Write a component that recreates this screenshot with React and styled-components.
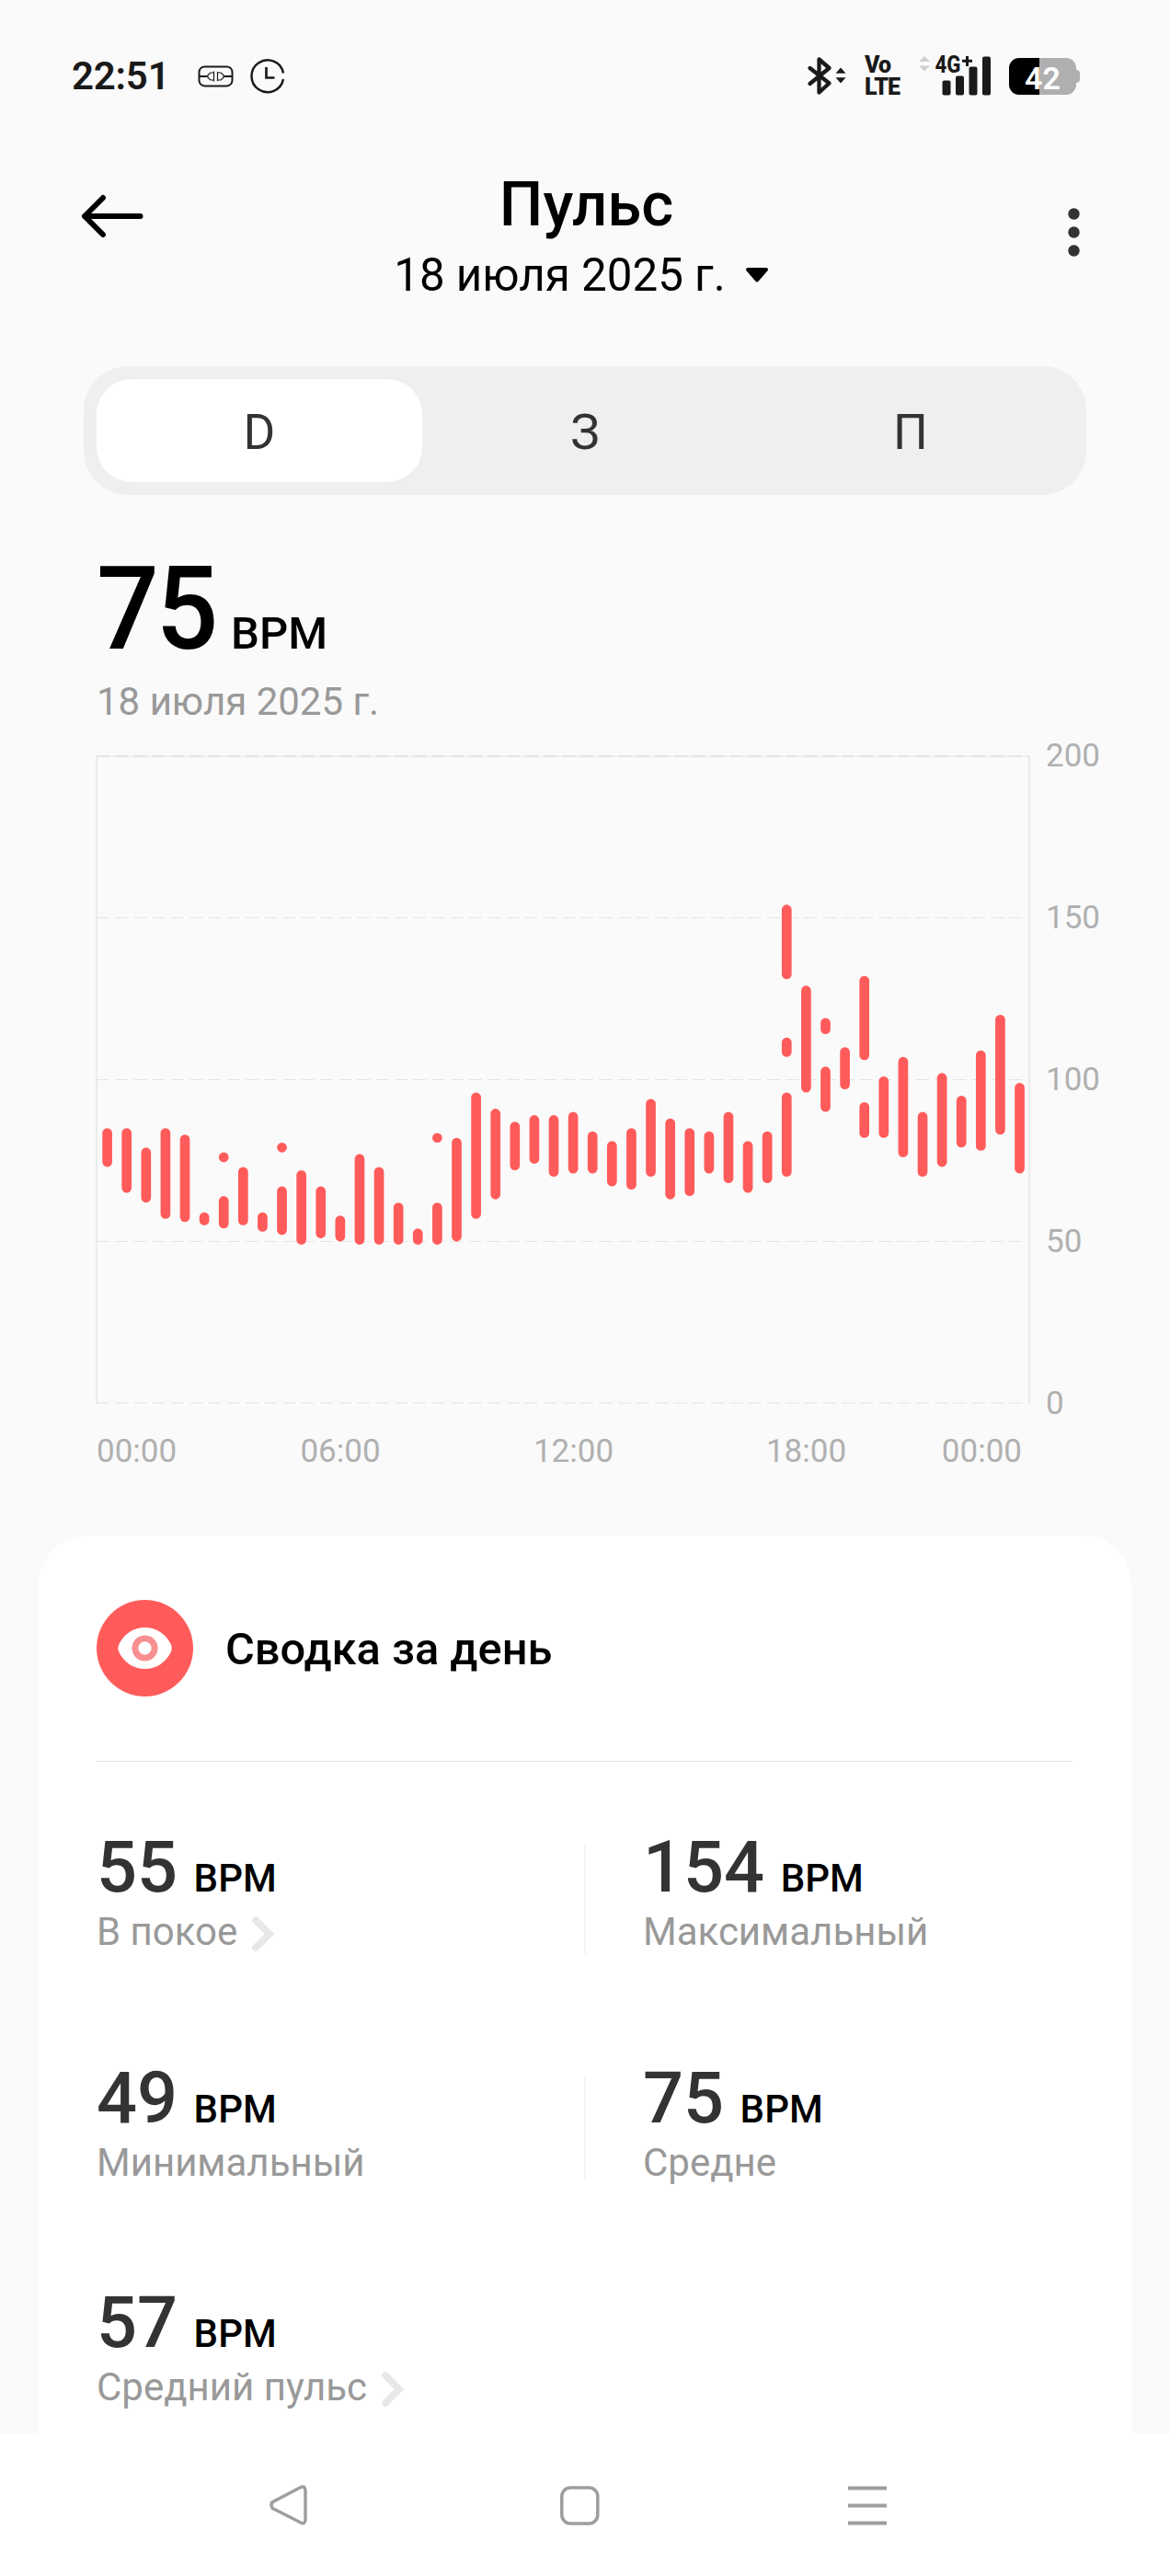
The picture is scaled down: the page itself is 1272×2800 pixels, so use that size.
// src/App.jsx
import styled, { createGlobalStyle } from 'styled-components';

const GlobalStyle = createGlobalStyle`
  * {
    box-sizing: border-box;
  }

  body {
    margin: 0;
    background: #fafafa;
    font-family: Roboto, "Noto Sans", sans-serif;
  }

  svg {
    display: block;
    flex-shrink: 0;
    overflow: visible;
  }
`;

const Screen = styled.div`
  width: 1272px;
  height: 2800px;
  display: flex;
  flex-direction: column;
  overflow: hidden;
  background: #fafafa;
  line-height: 1;
  white-space: nowrap;
`;

const StatusBar = styled.div`
  height: 164px;
  display: flex;
  justify-content: space-between;
  align-items: center;
  padding: 1px 102px 0 78px;
  color: #1a1a1a;
`;

const StatusGroup = styled.div`
  display: flex;
  align-items: center;
  gap: ${p => p.$gap}px;
`;

const Time = styled.span`
  width: 119px;
  font-size: 42px;
  font-weight: 600;
  letter-spacing: -0.2px;
`;

const Volte = styled.div`
  width: 39px;
  font-size: 25px;
  line-height: 24px;
  font-weight: 900;
  letter-spacing: -0.9px;
`;

const Battery = styled.div`
  position: relative;
  width: 73px;
  height: 40px;
  display: flex;
  align-items: center;
  justify-content: center;
  border-radius: 11px;
  background: linear-gradient(to right, #000 33px, #afafaf 33px);
  color: #fff;
  font-size: 34px;
  font-weight: 600;
  padding-top: 4px;

  &::after {
    content: '';
    position: absolute;
    right: -4px;
    top: 13px;
    width: 4px;
    height: 14px;
    border-radius: 0 4px 4px 0;
    background: #afafaf;
  }
`;

const Header = styled.header`
  height: 234px;
  display: grid;
  grid-template-columns: 180px 1fr 180px;
`;

const BackButton = styled.div`
  padding: 47px 0 0 88px;
`;

const MenuButton = styled.div`
  padding: 62px 0 0 69px;
`;

const Heading = styled.div`
  display: flex;
  flex-direction: column;
  align-items: center;
  padding-top: 25px;
  color: #000;
`;

const Title = styled.h1`
  margin: 0 0 19px;
  padding-left: 3px;
  font-size: 67px;
  font-weight: 500;
`;

const DatePicker = styled.div`
  display: flex;
  align-items: center;
  gap: 21px;
  padding-right: 8px;
  font-size: 49.3px;
`;

const Tabs = styled.div`
  height: 140px;
  margin: 0 91px;
  padding: 14px;
  display: flex;
  border-radius: 48px;
  background: #efefef;
`;

const Tab = styled.div`
  flex: 1;
  display: flex;
  align-items: center;
  justify-content: center;
  padding-top: 5px;
  border-radius: 38px;
  background: ${p => (p.$active ? '#fff' : 'transparent')};
  color: #333;
  font-size: 53px;
`;

const Summary = styled.div`
  height: 266px;
  padding: 60px 0 0 105px;
`;

const Reading = styled.div`
  display: flex;
  align-items: baseline;
  gap: ${p => p.$gap}px;
`;

const BigValue = styled.span`
  width: 132px;
  font-size: 127px;
  font-weight: 500;
  letter-spacing: -3.5px;
  transform: scaleX(0.94);
  transform-origin: left;
`;

const BigUnit = styled.span`
  font-size: 49px;
  font-weight: 500;
`;

const SummaryDate = styled.div`
  margin-top: 17px;
  font-size: 42px;
  color: #999;
`;

const Chart = styled.div`
  display: flex;
  gap: 17px;
  height: 739px;
  padding-left: 104px;
`;

const YAxis = styled.div`
  display: flex;
  flex-direction: column;
  justify-content: space-between;
  font-size: 35px;
  color: #b0b0b0;
`;

const XAxis = styled.div`
  display: grid;
  grid-template-columns: 138px 254px 253px 253px 108px;
  margin: 17px 0 74px 105px;
  font-size: 35px;
  color: #b0b0b0;
  text-align: center;

  span:first-child {
    text-align: left;
  }

  span:last-child {
    text-align: right;
  }
`;

const Card = styled.section`
  flex: 1;
  margin: 0 42px;
  padding: 70px 64px 0 63px;
  border-radius: 54px 54px 0 0;
  background: #fff;
  overflow: hidden;
`;

const CardHead = styled.div`
  display: flex;
  align-items: center;
  gap: 35px;
  padding-bottom: 70px;
  border-bottom: 1px solid #e3e3e3;
`;

const CardTitle = styled.h2`
  margin: 4px 0 0;
  font-size: 48.8px;
  font-weight: 500;
  color: #000;
`;

const Stats = styled.div`
  padding-top: 76px;
`;

const StatRow = styled.div`
  display: flex;
  height: ${p => p.$height}px;
`;

const StatCell = styled.div`
  flex: 0 0 530px;
`;

const Divider = styled.div`
  flex: 0 0 2px;
  margin: 15px 62px 118px 0;
  background: #f4f4f4;
`;

const StatValue = styled.span`
  font-size: 77.5px;
  font-weight: 500;
  color: #333;
`;

const StatUnit = styled.span`
  font-size: 42px;
  font-weight: 500;
  color: #000;
`;

const StatLabel = styled.div`
  display: flex;
  align-items: center;
  gap: 15px;
  height: 42px;
  margin-top: 10px;
  font-size: 42px;
  color: #999;
`;

const NavBar = styled.nav`
  height: 155px;
  display: flex;
  align-items: center;
  gap: 269.5px;
  padding-left: 291px;
  background: #fff;
`;

// [max, min] ranges per half hour, some slots have more than one range
const pulse = [
  [[85, 73]], [[85, 65]], [[79, 62]], [[85, 57]], [[83, 56]], [[59, 55]],
  [[76, 76], [64, 54]], [[73, 55]], [[59, 53]], [[79, 79], [67, 52]],
  [[72, 49]], [[67, 51]], [[58, 50]], [[77, 49]], [[73, 49]], [[62, 49]],
  [[54, 49]], [[82, 82], [62, 49]], [[82, 50]], [[96, 57]], [[91, 63]],
  [[87, 72]], [[89, 74]], [[89, 70]], [[90, 71]], [[84, 71]], [[81, 67]],
  [[85, 66]], [[94, 70]], [[88, 63]], [[85, 64]], [[84, 71]], [[90, 68]],
  [[81, 65]], [[84, 68]], [[154, 131], [113, 107], [96, 70]], [[129, 96]],
  [[119, 114], [104, 90]], [[110, 97]], [[132, 106], [93, 82]], [[101, 82]],
  [[107, 76]], [[90, 70]], [[102, 73]], [[95, 79]], [[109, 78]], [[120, 83]],
  [[99, 71]],
];

const BAR = 10.7;
const STEP = 21.105;
const yOf = v => 721.4 - v * 3.52;

function PulseChart() {
  return (
    <svg width="1016" height="739" viewBox="0 0 1016 739">
      <path d="M0 18H1016" stroke="#f0f0f0" strokeWidth="2" />
      <path d="M1 17V722M1015 17V722" stroke="#ebebeb" strokeWidth="2" />
      <path d="M1 18H1015" stroke="#e4e4e4" strokeWidth="2" strokeDasharray="14 6.25" />
      {[150, 100, 50].map(v => (
        <path
          key={v}
          d={`M1 ${Math.floor(yOf(v)) + 0.5}H1015`}
          stroke="#e5e5e5"
          strokeWidth="1"
          strokeDasharray="14 6.25"
        />
      ))}
      <path d="M1 721H1015" stroke="#eeeeee" strokeWidth="2" strokeDasharray="14 6.25" />
      {pulse.map((ranges, i) =>
        ranges.map(([max, min]) => {
          const h = Math.max((max - min) * 3.52, BAR);
          const mid = (yOf(max) + yOf(min)) / 2;
          return (
            <rect
              key={`${i}-${max}`}
              x={12.6 + i * STEP - BAR / 2}
              y={mid - h / 2}
              width={BAR}
              height={h}
              rx={BAR / 2}
              fill="#ff5b5b"
            />
          );
        })
      )}
    </svg>
  );
}

const PlugIcon = () => (
  <svg width="38" height="24" viewBox="0 0 38 24" fill="none" stroke="#1a1a1a">
    <rect x="1.5" y="1.4" width="36" height="21" rx="6" strokeWidth="2" />
    <path d="M1.5 12H10.5M28.5 12H37.5" strokeWidth="1.8" />
    <path d="M17.5 6.5V17.5M17.5 8H14L11 10.5V13.5L14 16H17.5" strokeWidth="1.2" />
    <path d="M21.5 7V17M21.5 8H25L28 10.5V13.5L25 16H21.5" strokeWidth="1.2" />
  </svg>
);

const ClockIcon = () => (
  <svg width="38" height="38" viewBox="0 0 38 38" fill="none" stroke="#1a1a1a" strokeWidth="2.5">
    <path d="M37 15.5A17.4 17.4 0 1 0 37 22" />
    <path d="M18.5 9V20.5H27.5" strokeWidth="2.7" />
  </svg>
);

const BluetoothIcon = () => (
  <svg width="41" height="43" viewBox="0 0 41 43">
    <path
      d="M1.5 13L22.5 29.5L11.5 39.5V3.5L22.5 13L1.5 30"
      fill="none"
      stroke="#1a1a1a"
      strokeWidth="4.3"
      strokeLinejoin="round"
      strokeLinecap="round"
    />
    <path d="M35 12.5L40.5 18.8H29.5ZM35 29.5L40.5 23.2H29.5Z" fill="#1a1a1a" />
  </svg>
);

const SignalIcon = () => (
  <svg width="78" height="43" viewBox="0 0 78 43">
    <path d="M6 0L12 6H0ZM6 16.5L12 10.5H0Z" fill="#cfcfcf" />
    <text x="17.5" y="17.8" fontSize="25" fontWeight="800" fill="#1a1a1a" textLength="28" lengthAdjust="spacingAndGlyphs">4G</text>
    <path d="M47 5.2H58M52.5 0V11" stroke="#1a1a1a" strokeWidth="3" />
    <g fill="#1a1a1a">
      <rect x="25.5" y="26.5" width="9" height="16" rx="2" />
      <rect x="40" y="21.5" width="9" height="21" rx="2" />
      <rect x="54.5" y="11.5" width="9" height="31" rx="2" />
      <rect x="69" y="0.5" width="9" height="42" rx="2" />
    </g>
  </svg>
);

const EyeIcon = () => (
  <svg width="105" height="105" viewBox="0 0 105 105">
    <circle cx="52.5" cy="52.5" r="52.5" fill="#ff5b5b" />
    <path
      d="M24.5 48C30 37 40 30 52.5 30S75 37 80.7 48Q82.7 52.5 80.7 57C75 68 65 75 52.5 75S30 68 24.5 57Q22.3 52.5 24.5 48Z"
      fill="#fff"
    />
    <circle cx="52.5" cy="52.5" r="10.6" fill="none" stroke="#f88f90" strokeWidth="6.8" />
  </svg>
);

const Chevron = () => (
  <svg width="26" height="42" viewBox="0 0 26 42">
    <path
      d="M5 8L20 23L5 38"
      fill="none"
      stroke="#e8e8e8"
      strokeWidth="7.5"
      strokeLinecap="round"
    />
  </svg>
);

function Stat({ value, label, link }) {
  return (
    <StatCell>
      <Reading $gap={17.5}>
        <StatValue>{value}</StatValue>
        <StatUnit>BPM</StatUnit>
      </Reading>
      <StatLabel>
        {label}
        {link && <Chevron />}
      </StatLabel>
    </StatCell>
  );
}

export default function App() {
  return (
    <>
      <GlobalStyle />
      <Screen>
        <StatusBar>
          <StatusGroup $gap={18}>
            <Time>22:51</Time>
            <PlugIcon />
            <ClockIcon />
          </StatusGroup>
          <StatusGroup $gap={20}>
            <BluetoothIcon />
            <Volte>
              <div>Vo</div>
              <div>LTE</div>
            </Volte>
            <SignalIcon />
            <Battery>42</Battery>
          </StatusGroup>
        </StatusBar>

        <Header>
          <BackButton>
            <svg width="68" height="48" viewBox="0 0 68 48">
              <path
                d="M4 24H64.5M24 4L4 24L24 44"
                fill="none"
                stroke="#000"
                strokeWidth="6"
                strokeLinecap="round"
                strokeLinejoin="round"
              />
            </svg>
          </BackButton>
          <Heading>
            <Title>Пульс</Title>
            <DatePicker>
              18 июля 2025 г.
              <svg width="26" height="16" viewBox="0 0 26 16">
                <path d="M3 1H23L13 12.5Z" stroke="#000" strokeWidth="4" strokeLinejoin="round" />
              </svg>
            </DatePicker>
          </Heading>
          <MenuButton>
            <svg width="14" height="54" viewBox="0 0 14 54" fill="#333">
              <circle cx="6.5" cy="6.5" r="6.2" />
              <circle cx="6.5" cy="26.5" r="6.2" />
              <circle cx="6.5" cy="46.5" r="6.2" />
            </svg>
          </MenuButton>
        </Header>

        <Tabs>
          <Tab $active>D</Tab>
          <Tab>З</Tab>
          <Tab>П</Tab>
        </Tabs>

        <Summary>
          <Reading $gap={14}>
            <BigValue>75</BigValue>
            <BigUnit>BPM</BigUnit>
          </Reading>
          <SummaryDate>18 июля 2025 г.</SummaryDate>
        </Summary>

        <Chart>
          <PulseChart />
          <YAxis>
            {[200, 150, 100, 50, 0].map(v => (
              <span key={v}>{v}</span>
            ))}
          </YAxis>
        </Chart>
        <XAxis>
          <span>00:00</span>
          <span>06:00</span>
          <span>12:00</span>
          <span>18:00</span>
          <span>00:00</span>
        </XAxis>

        <Card>
          <CardHead>
            <EyeIcon />
            <CardTitle>Сводка за день</CardTitle>
          </CardHead>
          <Stats>
            <StatRow $height={251}>
              <Stat value="55" label="В покое" link />
              <Divider />
              <Stat value="154" label="Максимальный" />
            </StatRow>
            <StatRow $height={244}>
              <Stat value="49" label="Минимальный" />
              <Divider />
              <Stat value="75" label="Средне" />
            </StatRow>
            <StatRow $height={160}>
              <Stat value="57" label="Средний пульс" link />
            </StatRow>
          </Stats>
        </Card>

        <NavBar>
          <svg width="46" height="46" viewBox="0 0 46 46" fill="none" stroke="#9e9e9e" strokeWidth="3.5">
            <path d="M4.5 20L36 3.5Q41 1.5 41 8V38Q41 44.5 36 42L5.5 26.5Q2.5 23 5.5 19.5Z" strokeLinejoin="round" />
          </svg>
          <svg width="46" height="46" viewBox="0 0 46 46" fill="none" stroke="#9e9e9e" strokeWidth="3.5">
            <rect x="3.8" y="4" width="39" height="39" rx="9.5" />
          </svg>
          <svg width="46" height="46" viewBox="0 0 46 46" stroke="#9e9e9e" strokeWidth="4">
            <path d="M0 4.5H42M0 23.5H42M0 42.5H42" />
          </svg>
        </NavBar>
      </Screen>
    </>
  );
}
